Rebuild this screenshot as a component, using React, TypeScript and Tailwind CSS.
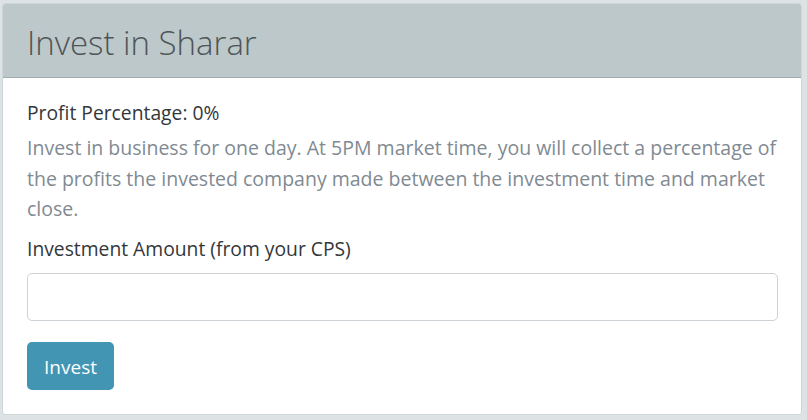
export default function App() {
  return (
    <div
      className="h-[420px] w-[807px] bg-[#dde2e4] pt-[3px] pl-[2px] pr-[5px]"
      style={{ fontFamily: '"Open Sans", "Noto Sans", sans-serif' }}
    >
      <div className="h-[412px] overflow-hidden rounded-[3px] border border-[#cfd6d8] bg-white">
        <div className="flex h-[74px] items-center border-b border-[#9fabad] bg-[#bcc8c9] px-[24px] pt-[3px]">
          <h1 className="text-[33px] font-light leading-none text-[#4f5458]">Invest in Sharar</h1>
        </div>
        <div className="px-[24px] pt-[20px]">
          <div className="text-[19.3px] leading-[30px] text-[#33373b]">Profit Percentage: 0%</div>
          <p className="mt-[5px] text-[19.5px] leading-[30.5px] text-[#7f8a92]">
            Invest in business for one day. At 5PM market time, you will collect a percentage of the
            profits the invested company made between the investment time and market close.
          </p>
          <label className="mt-[9px] block text-[19.3px] leading-[30px] text-[#33373b]">
            Investment Amount (from your CPS)
          </label>
          <input
            type="text"
            className="mt-[9px] block h-[48px] w-[751px] rounded-[5px] border border-[#cdd2d6] bg-white px-3 outline-none"
          />
          <button className="mt-[21px] flex h-[48px] w-[87px] items-center justify-center rounded-[5px] bg-[#4295b3] pt-[4px] text-[19px] text-white">
            Invest
          </button>
        </div>
      </div>
    </div>
  );
}
